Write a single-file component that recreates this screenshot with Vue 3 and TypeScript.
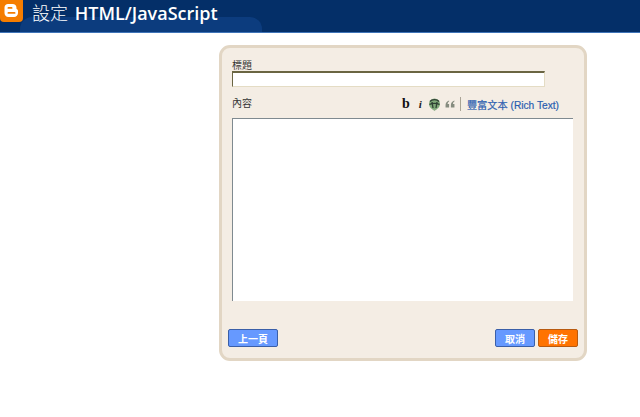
<script setup lang="ts">
const title: string = '設定'
const subtitle: string = 'HTML/JavaScript'
</script>

<template>
  <div class="page">
    <header class="bar">
      <div class="glow"></div>
      <div class="logo">
        <svg width="23" height="23" viewBox="0 0 23 23">
          <rect x="0" y="-3" width="23" height="25" rx="4" fill="#f57d00" />
          <path d="M8 4h4.5C15 4 16.5 5.6 16.5 8v1c.9.2 1.5.9 1.5 1.9V13c0 2.2-1.6 4-4 4H8.5C6 17 4.5 15.2 4.5 13V7.5C4.5 5.5 6 4 8 4z" fill="#fff" />
          <rect x="7.5" y="7" width="5" height="1.8" rx=".9" fill="#f57d00" />
          <rect x="7.5" y="12" width="8" height="1.8" rx=".9" fill="#f57d00" />
        </svg>
      </div>
      <h1 class="heading"><span class="cjk">{{ title }}</span> <b>{{ subtitle }}</b></h1>
    </header>

    <main class="card">
      <label class="label title-label">標題</label>
      <div class="title-input"></div>

      <div class="toolbar-row">
        <span class="label">內容</span>
        <div class="tools">
          <span class="tool-b">b</span>
          <span class="tool-i">i</span>
          <svg class="tool-link" width="13" height="13" viewBox="0 0 13 13">
            <circle cx="6.5" cy="6" r="5.5" fill="#7fa878" />
            <path d="M2 3.5C4 1 9 1 11 3.5M1.5 6.5C4 5 9 5 11.5 6.5M4 4l1 6M9 4l-1 6" stroke="#2f4034" stroke-width="1.3" fill="none" />
            <path d="M4 11h5l-2.5 2z" fill="#8fae88" />
          </svg>
          <svg class="tool-quote" width="10" height="8" viewBox="0 0 11 9">
            <path d="M4.5 0.5C2 1.5 0.5 3 0.5 5.5V8.5H4.5V4.5H2.8C3 3 3.8 2.2 4.5 1.8zM10.5 0.5C8 1.5 6.5 3 6.5 5.5V8.5H10.5V4.5H8.8C9 3 9.8 2.2 10.5 1.8z" fill="#858c7f" />
          </svg>
          <span class="sep"></span>
          <a class="rich">豐富文本 (Rich Text)</a>
        </div>
      </div>

      <div class="editor"></div>

      <div class="actions">
        <button class="btn blue wide">上一頁</button>
        <div class="right">
          <button class="btn blue">取消</button>
          <button class="btn orange">儲存</button>
        </div>
      </div>
    </main>
  </div>
</template>

<style>
html, body { margin: 0; background: #fff; }
</style>

<style scoped>
.page {
  width: 640px;
  height: 417px;
  overflow: hidden;
  background: #fff;
  font-family: "Liberation Sans", "Noto Sans CJK TC", sans-serif;
}
.bar {
  position: relative;
  height: 33px;
  box-sizing: border-box;
  border-bottom: 1px solid #3f74b8;
  background: #042f68;
  display: flex;
  align-items: flex-start;
  overflow: hidden;
}
.glow {
  position: absolute;
  left: 20px;
  top: 17px;
  width: 242px;
  height: 24px;
  border-radius: 12px 12px 0 0;
  background: #0c3c7e;
}
.logo {
  position: relative;
  width: 23px;
  height: 23px;
  flex: none;
}
.heading {
  position: relative;
  margin: 0 0 0 9px;
  font-size: 18px;
  line-height: 26px;
  font-weight: 400;
  color: #fff;
  white-space: nowrap;
  font-family: "Open Sans", "Noto Sans CJK TC", sans-serif;
}
.heading b { font-weight: 600; margin-left: 2px; }
.cjk { font-weight: 300; }
.card {
  margin: 12px 0 0 219px;
  width: 368px;
  height: 316px;
  box-sizing: border-box;
  border: 3px solid #e2d6c4;
  border-radius: 11px;
  background: #f4ede4;
  padding: 12px 6px 0 6px;
  display: flex;
  flex-direction: column;
}
.label {
  font-size: 10px;
  line-height: 12px;
  color: #333;
}
.title-label { margin-left: 4px; display: block; }
.title-input {
  margin: -1px 0 0 4px;
  width: 313px;
  height: 16px;
  box-sizing: border-box;
  background: #fff;
  border-top: 2px solid #6a6542;
  border-left: 1px solid #6a6542;
  border-right: 1px solid #e4dcc4;
  border-bottom: 1px solid #e4dcc4;
}
.toolbar-row {
  margin: 10px 0 0 4px;
  height: 14px;
  display: flex;
  align-items: center;
  justify-content: space-between;
  padding-right: 19px;
  box-sizing: border-box;
}
.tools { display: flex; align-items: center; }
.tool-b {
  font: bold 14px "Liberation Serif", serif;
  color: #111;
  margin-right: 9px;
}
.tool-i {
  font: italic bold 11px "Liberation Serif", serif;
  color: #222;
  margin-right: 6px;
}
.tool-link { margin-right: 4px; }
.tool-quote { margin-right: 5px; }
.sep {
  width: 1px;
  height: 14px;
  background: #aaa496;
  margin-right: 6px;
}
.rich {
  font-size: 10.2px;
  color: #2a5db0;
  white-space: nowrap;
  -webkit-text-stroke: 0.2px #2a5db0;
}
.editor {
  margin: 7px 0 0 4px;
  width: 341px;
  height: 183px;
  box-sizing: border-box;
  background: #fff;
  border-top: 1px solid #7f8a90;
  border-left: 1px solid #7f8a90;
}
.actions {
  margin-top: 28px;
  display: flex;
  justify-content: space-between;
}
.right { display: flex; gap: 3px; }
.btn {
  height: 18px;
  width: 40px;
  box-sizing: border-box;
  padding: 0;
  border-radius: 2px;
  font: bold 10px "Liberation Sans", "Noto Sans CJK TC", sans-serif;
  color: #fff;
  cursor: pointer;
}
.btn.wide { width: 50px; }
.blue { background: #6699ff; border: 1px solid #3a5fa8; }
.orange { background: #ff7300; border: 1px solid #b85a10; }
</style>
